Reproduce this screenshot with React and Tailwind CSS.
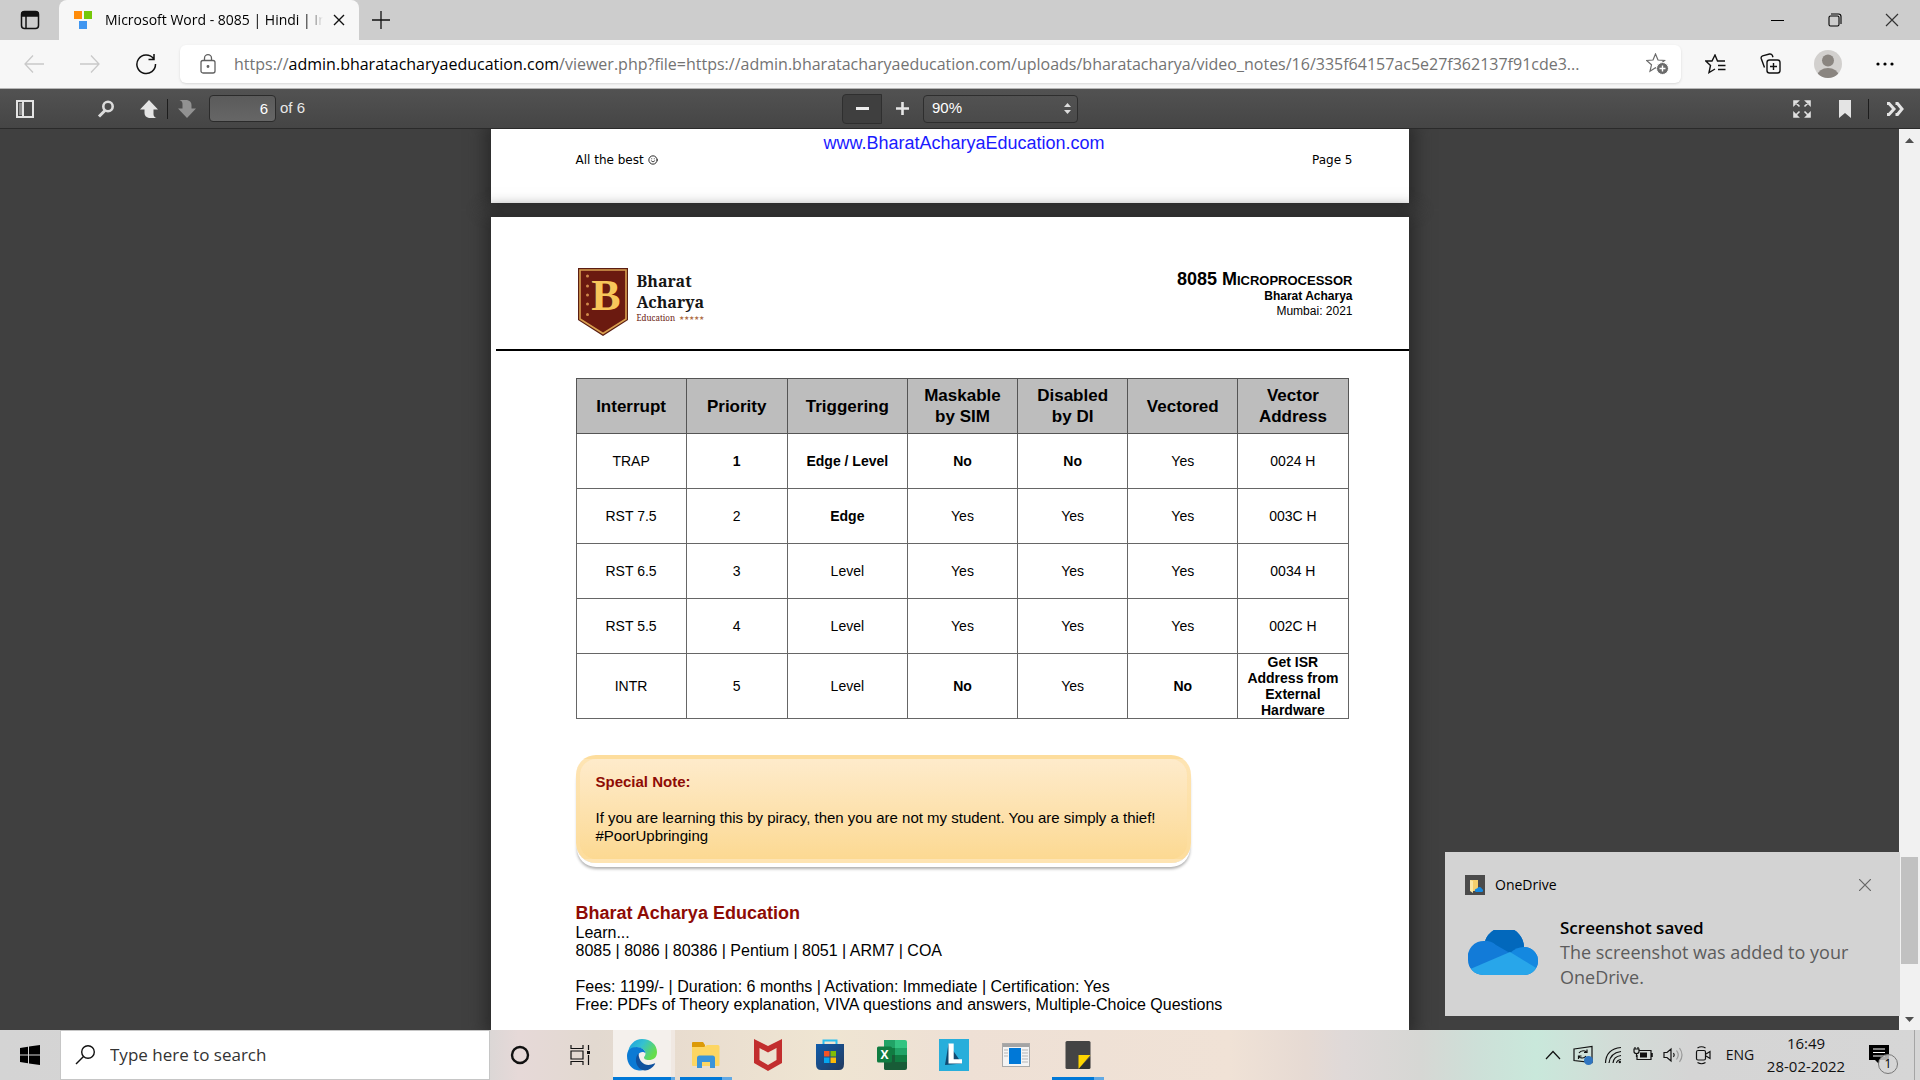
import React from "react";
import { Smile } from "lucide-react";

const UI = "font-['Open_Sans','Noto_Sans',sans-serif]";

const columns = [
  { label: "Interrupt", width: "w-[110px]" },
  { label: "Priority", width: "w-[101px]" },
  { label: "Triggering", width: "w-[120px]" },
  { label: "Maskable by SIM", width: "w-[110px]" },
  { label: "Disabled by DI", width: "w-[110px]" },
  { label: "Vectored", width: "w-[110px]" },
  { label: "Vector Address", width: "w-[110px]" },
];

// Cells that start with "*" are printed in bold.
const rows = [
  ["TRAP", "*1", "*Edge / Level", "*No", "*No", "Yes", "0024 H"],
  ["RST 7.5", "2", "*Edge", "Yes", "Yes", "Yes", "003C H"],
  ["RST 6.5", "3", "Level", "Yes", "Yes", "Yes", "0034 H"],
  ["RST 5.5", "4", "Level", "Yes", "Yes", "Yes", "002C H"],
  ["INTR", "5", "Level", "*No", "Yes", "*No", "*Get ISR Address from External Hardware"],
];

function TabStrip() {
  return (
    <header className="flex h-10 shrink-0 items-stretch bg-[#cdcdcd]">
      <button aria-label="Tab actions" className="flex w-[59px] items-center justify-center">
        <svg width="20" height="20" viewBox="0 0 20 20" fill="none" stroke="#111" strokeWidth="1.5">
          <rect x="1.5" y="1.5" width="17" height="17" rx="3" />
          <path d="M2 3.5Q2 2 4 2h12q2 0 2 1.5V6H2z" fill="#111" />
          <path d="M6 6v12" />
        </svg>
      </button>
      <div className="flex w-[300px] items-center rounded-t-lg bg-[#f7f7f7] pr-1 pl-[14px]">
        <svg width="20" height="20" viewBox="0 0 20 20" className="shrink-0">
          <rect x="1" y="1" width="8" height="8" fill="#ff8c0a" />
          <rect x="11" y="1" width="8" height="8" fill="#76c80a" />
          <rect x="6" y="11" width="8" height="8" fill="#4096f0" />
        </svg>
        <span className="ml-3 min-w-0 flex-1 overflow-hidden text-sm whitespace-nowrap text-black [mask-image:linear-gradient(to_right,black_92%,transparent)]">
          Microsoft Word - 8085 | Hindi | In
        </span>
        <button aria-label="Close tab" className="flex w-8 items-center justify-center">
          <svg width="12" height="12" viewBox="0 0 12 12" stroke="#111" strokeWidth="1.4"><path d="M1 1l10 10M11 1L1 11" /></svg>
        </button>
      </div>
      <button aria-label="New tab" className="flex w-11 items-center justify-center">
        <svg width="18" height="18" viewBox="0 0 18 18" stroke="#111" strokeWidth="1.3"><path d="M9 0v18M0 9h18" /></svg>
      </button>
      <div className="ml-auto flex">
        <button aria-label="Minimize" className="flex w-[57px] items-center justify-center">
          <svg width="13" height="13" viewBox="0 0 13 13" stroke="#000"><path d="M0 6.5h13" /></svg>
        </button>
        <button aria-label="Restore" className="flex w-[57px] items-center justify-center">
          <svg width="14" height="14" viewBox="0 0 14 14" fill="none" stroke="#000" strokeWidth="1.1">
            <rect x="1" y="3" width="10" height="10" rx="1.5" />
            <path d="M3 1h7.5Q13 1 13 3.5V11" />
          </svg>
        </button>
        <button aria-label="Close" className="flex w-[57px] items-center justify-center">
          <svg width="14" height="14" viewBox="0 0 14 14" stroke="#333" strokeWidth="1.2"><path d="M1 1l12 12M13 1L1 13" /></svg>
        </button>
      </div>
    </header>
  );
}

const star = "M9.5 1l2.5 6 6.5.5-5 4.3 1.5 6.5-5.5-3.6L4 18.3l1.5-6.5-5-4.3L7 7z";

function AddressBar() {
  return (
    <nav className="flex h-[49px] shrink-0 items-center border-b border-[#b5b5b5] bg-[#f7f7f7] pb-px">
      <button aria-label="Back" className="flex w-[68px] items-center justify-center">
        <svg width="20" height="20" viewBox="0 0 20 20" fill="none" stroke="#c9c9c9" strokeWidth="1.3"><path d="M20 10H1M9 1.5L1 10l8 8.5" /></svg>
      </button>
      <button aria-label="Forward" className="flex w-11 items-center justify-center">
        <svg width="20" height="20" viewBox="0 0 20 20" fill="none" stroke="#c9c9c9" strokeWidth="1.3"><path d="M0 10h19M11 1.5L19 10l-8 8.5" /></svg>
      </button>
      <button aria-label="Refresh" className="flex w-[68px] items-center justify-center">
        <svg width="22" height="22" viewBox="0 0 22 22" fill="none" stroke="#111" strokeWidth="1.5"><path d="M18.5 5.5A9.3 9.3 0 1 0 20.5 11M19 1v5.5h-5.500" /></svg>
      </button>
      <div className="flex h-[38px] min-w-0 flex-1 items-center rounded-md bg-white pr-3 pl-5 shadow-sm">
        <svg width="16" height="20" viewBox="0 0 16 20" fill="none" stroke="#606060" strokeWidth="1.3" className="shrink-0">
          <rect x="1" y="6.500" width="14" height="12.500" rx="2" />
          <path d="M4.500 6.500V4.200a3.500 3.500 0 0 1 7 0v2.300" />
          <circle cx="8" cy="12.500" r=".8" fill="#606060" />
        </svg>
        <a href="#address" className="ml-[18px] min-w-0 flex-1 truncate text-base text-[#737373]">
          https://<span className="text-black">admin.bharatacharyaeducation.com</span>/viewer.php?file=https://admin.bharatacharyaeducation.com/uploads/bharatacharya/video_notes/16/335f64157ac5e27f362137f91cde3...
        </a>
        <button aria-label="Add to favorites" className="ml-6 shrink-0">
          <svg width="23" height="22" viewBox="0 0 23 22" fill="none" stroke="#6b6b6b" strokeWidth="1.2">
            <path d={star} />
            <circle cx="16.500" cy="15.500" r="6" fill="#6b6b6b" stroke="#fff" strokeWidth="1" />
            <path d="M16.500 12.500v6M13.500 15.500h6" stroke="#fff" strokeWidth="1.4" />
          </svg>
        </button>
      </div>
      <div className="ml-[6px] flex items-center">
        <button aria-label="Favorites" className="flex w-[56px] items-center justify-center">
          <svg width="21" height="20" viewBox="0 0 21 20" fill="none" stroke="#111" strokeWidth="1.400">
            <path d="M20 7h-7.500L10 1 7 7H.800l4.700 4.500L4 18.500l6-3.500" />
            <path d="M13 11.500h7.500M13 15.500h7.500" />
          </svg>
        </button>
        <button aria-label="Collections" className="flex w-[55px] items-center justify-center">
          <svg width="21" height="21" viewBox="0 0 21 21" fill="none" stroke="#111" strokeWidth="1.400">
            <rect x="7" y="7" width="13" height="13" rx="2.500" />
            <path d="M13.500 10v7M10 13.500h7M4.500 14.500L1.200 5.500Q.800 3.500 2.600 2.800L9.500 1q2-.3 2.800 1.300l.7 2" />
          </svg>
        </button>
        <button aria-label="Profile" className="flex w-[59px] items-center justify-center">
          <svg width="28" height="28" viewBox="0 0 28 28">
            <clipPath id="face"><circle cx="14" cy="14" r="14" /></clipPath>
            <circle cx="14" cy="14" r="14" fill="#d2d0ce" />
            <g fill="#8a8580" clipPath="url(#face)"><circle cx="14" cy="10.500" r="6" /><ellipse cx="14" cy="25.500" rx="10.500" ry="7.500" /></g>
          </svg>
        </button>
        <button aria-label="Settings and more" className="flex w-[56px] items-center justify-center">
          <svg width="18" height="4" viewBox="0 0 18 4"><circle cx="2" cy="2" r="1.600" /><circle cx="9" cy="2" r="1.600" /><circle cx="16" cy="2" r="1.600" /></svg>
        </button>
        <span className="w-[7px]" />
      </div>
    </nav>
  );
}

function ViewerToolbar() {
  return (
    <div className="grid h-10 shrink-0 grid-cols-[1fr_auto_1fr] items-center border-b border-[#2a2a2a] bg-linear-to-b from-[#525252] to-[#454545] font-['Liberation_Sans',sans-serif] text-[15px] text-[#e8e8e8]">
      <div className="flex items-center">
        <button aria-label="Toggle sidebar" className="flex w-[50px] items-center justify-center">
          <svg width="18" height="18" viewBox="0 0 18 18" fill="none" stroke="#e4e4e4" strokeWidth="2">
            <rect x="1" y="1" width="16" height="16" />
            <rect x="3" y="3" width="3" height="12" fill="#8a8a8a" stroke="none" />
            <path d="M7 2v14" />
          </svg>
        </button>
        <button aria-label="Find in document" className="ml-9 flex w-10 items-center justify-center">
          <svg width="18" height="18" viewBox="0 0 18 18" fill="none" stroke="#dcdcdc" strokeWidth="2.600"><circle cx="11" cy="6.500" r="4.700" /><path d="M8 10.500l-6 6" strokeWidth="3" /></svg>
        </button>
        <button aria-label="Previous page" className="flex w-[41px] items-center justify-center pl-1">
          <svg width="18" height="18" viewBox="0 0 18 18" fill="#e4e4e4"><path d="M9 0l9 9.500h-4.500V14q0 3 3 4H9q-4.500-1-4.500-5V9.500H0z" /></svg>
        </button>
        <span className="h-5 w-px bg-[#1d1d1d]" />
        <button aria-label="Next page" className="flex w-[38px] items-center justify-center">
          <svg width="18" height="18" viewBox="0 0 18 18" fill="#929292"><path d="M9 18l9-9.500h-4.500V5q0-4-4.500-5H1.500q3 1 3 4v4.500H0z" /></svg>
        </button>
        <input aria-label="Page" defaultValue="6" className="ml-[3px] h-[27px] w-[67px] rounded-sm border border-[#2b2b2b] bg-linear-to-b from-[#5b5b5b] to-[#666] px-[7px] text-right text-white" />
        <span className="ml-1">of 6</span>
      </div>
      <div className="flex items-center">
        <button aria-label="Zoom out" className="flex h-[30px] w-10 items-center justify-center rounded-l-sm border border-[#2f2f2f] bg-[#3f3f3f]">
          <svg width="13" height="3" viewBox="0 0 13 3"><path d="M0 0h13v3H0z" fill="#eee" /></svg>
        </button>
        <button aria-label="Zoom in" className="flex w-[41px] items-center justify-center">
          <svg width="13" height="13" viewBox="0 0 13 13" stroke="#e6e6e6" strokeWidth="2.600"><path d="M0 6.500h13M6.500 0v13" /></svg>
        </button>
        <div className="relative flex items-center">
          <select aria-label="Zoom" defaultValue="90%" className="h-7 w-[155px] appearance-none rounded-sm border border-[#2e2e2e] bg-linear-to-b from-[#525252] to-[#4a4a4a] px-2 text-white">
            <option>90%</option>
            <option>100%</option>
          </select>
          <svg width="7" height="11" viewBox="0 0 7 11" fill="#ddd" className="pointer-events-none absolute right-[7px]"><path d="M3.500 0L7 4H0zM3.500 11L0 7h7z" /></svg>
        </div>
      </div>
      <div className="flex items-center justify-end">
        <button aria-label="Presentation mode" className="flex w-10 items-center justify-center">
          <svg width="18" height="18" viewBox="0 0 18 18" fill="#e0e0e0" stroke="#e0e0e0" strokeWidth="2">
            <path d="M1 1h4L1 5zM2 2l4.500 4.500M17 1v4l-4-4zM16 2l-4.500 4.500M1 17v-4l4 4zM2 16l4.500-4.500M17 17h-4l4-4zM16 16l-4.500-4.500" strokeWidth="1.600" />
          </svg>
        </button>
        <button aria-label="Current view" className="flex w-[46px] items-center justify-center">
          <svg width="12" height="18" viewBox="0 0 12 18" fill="#e4e4e4"><path d="M0 0h12v18l-6-5-6 5z" /></svg>
        </button>
        <span className="h-5 w-px bg-[#1d1d1d]" />
        <button aria-label="Tools" className="flex w-[51px] items-center justify-center">
          <svg width="18" height="14" viewBox="0 0 18 14" fill="none" stroke="#e4e4e4" strokeWidth="3"><path d="M1 1.500h2L8 7l-5 5.500H1M9.500 1.500h2L16 7l-4.500 5.500h-2" /></svg>
        </button>
      </div>
    </div>
  );
}

function BrandLogo() {
  return (
    <div className="flex items-start">
      <svg width="52" height="70" viewBox="0 0 52 70">
        <path d="M1 1h50v52L26 69 1 53z" fill="#5a1d12" />
        <path d="M3 3h46v49L26 66.500 3 52z" fill="#6b1a10" stroke="#d9a050" strokeWidth="1.600" />
        <g fill="#d08a4a">
          <circle cx="10.500" cy="9" r="1.500" /><circle cx="10.500" cy="19" r="1.500" /><circle cx="10.500" cy="28" r="1.500" /><circle cx="10.500" cy="37" r="1.500" /><circle cx="10.500" cy="47.500" r="1.500" />
        </g>
        <text x="29" y="43" textAnchor="middle" fontFamily="Liberation Serif, serif" fontWeight="bold" fontSize="44" fill="#f7c65a">B</text>
      </svg>
      <div className="ml-2 pt-1 font-['Noto_Serif','Liberation_Serif',serif] text-base leading-[21px] font-bold text-[#161616]">
        <div>Bharat</div>
        <div>Acharya</div>
        <div className="flex items-center text-[8px] leading-[10px] font-normal text-[#6b1a10]">Education <span className="ml-1 text-[6px] text-[#b07048]">★★★★★</span></div>
      </div>
    </div>
  );
}

function InterruptTable() {
  return (
    <table className="w-full table-fixed border-collapse text-center text-sm leading-[16px] text-black">
      <thead>
        <tr className="h-[55px] bg-[#bdbdbd] text-[17px] leading-[21px]">
          {columns.map((c) => (
            <th key={c.label} className={`${c.width} border border-[#555] px-3`}>{c.label}</th>
          ))}
        </tr>
      </thead>
      <tbody>
        {rows.map((row) => (
          <tr key={row[0]} className="h-[55px]">
            {row.map((cell, i) => (
              <td key={i} className={`border border-[#666] p-0 ${cell.startsWith("*") ? "font-bold" : ""}`}>
                <div className="mx-auto max-w-[96px]">{cell.replace("*", "")}</div>
              </td>
            ))}
          </tr>
        ))}
      </tbody>
    </table>
  );
}

function Document() {
  return (
    <main className="flex min-w-0 flex-1 flex-col items-center gap-[14px] overflow-hidden bg-[#404040]">
      <section className="flex h-[74px] w-[918px] shrink-0 flex-col bg-white pr-14 pl-[85px] shadow-[0_0_16px_6px_#2a2a2a]">
        <a href="#site" className="text-center font-['Liberation_Sans',sans-serif] text-lg leading-7 text-[#1a1aff]">www.BharatAcharyaEducation.com</a>
        <div className="-mt-[7px] flex items-center justify-between font-['DejaVu_Sans',sans-serif] text-xs leading-5 text-black">
          <span className="flex items-center gap-1">All the best <Smile size={10} /></span>
          <span>Page 5</span>
        </div>
      </section>
      <section className="min-h-0 w-[918px] flex-1 bg-white font-['Liberation_Sans',sans-serif] text-black shadow-[0_0_16px_6px_#2a2a2a]">
        <div className="ml-[5px] flex h-[134px] items-start justify-between border-b-2 border-black pt-[50px] pr-14 pl-[81px]">
          <BrandLogo />
          <div className="pt-[2px] text-right">
            <h1 className="text-lg leading-5 font-bold [font-variant-caps:small-caps]">8085 Microprocessor</h1>
            <div className="text-xs leading-[15px] font-bold">Bharat Acharya</div>
            <div className="text-xs leading-[15px]">Mumbai: 2021</div>
          </div>
        </div>
        <div className="pt-[27px] pr-[60px] pl-[85px]">
          <InterruptTable />
          <div className="mt-9 w-[615px] rounded-[20px] border-4 border-[#fddfa4]/60 bg-linear-to-b from-[#feebcb] to-[#fcd992] px-4 py-[14px] text-[15px] leading-[18px] shadow-[0_5px_0_-1px_#fff,0_7px_3px_-1px_#b0b0b0]">
            <h2 className="mb-[18px] font-bold text-[#8e0b05]">Special Note:</h2>
            <p>If you are learning this by piracy, then you are not my student. You are simply a thief! #PoorUpbringing</p>
          </div>
          <h2 className="mt-[39px] text-lg leading-[22px] font-bold text-[#8e0b05]">Bharat Acharya Education</h2>
          <div className="text-base leading-[18px] whitespace-nowrap">
            <p>Learn...</p>
            <p>8085 | 8086 | 80386 | Pentium | 8051 | ARM7 | COA</p>
            <p className="mt-[18px]">Fees: 1199/- | Duration: 6 months | Activation: Immediate | Certification: Yes</p>
            <p>Free: PDFs of Theory explanation, VIVA questions and answers, Multiple-Choice Questions</p>
          </div>
        </div>
      </section>
    </main>
  );
}

function Scrollbar() {
  return (
    <div className="flex w-[21px] shrink-0 flex-col items-center justify-between bg-[#f1f1f1]">
      <svg width="21" height="22" viewBox="0 0 21 22" fill="#505050"><path d="M6 14l4.500-5 4.500 5z" /></svg>
      <div className="mt-auto mb-[44px] h-[107px] w-[17px] bg-[#c1c1c1]" />
      <svg width="21" height="22" viewBox="0 0 21 22" fill="#505050"><path d="M6 9l4.500 5 4.500-5z" /></svg>
    </div>
  );
}

function Toast() {
  return (
    <aside className={`absolute right-5 bottom-[14px] flex h-[164px] w-[455px] flex-col bg-[#d3d3d3] px-5 pt-[23px] ${UI}`}>
      <div className="flex items-center">
        <svg width="20" height="20" viewBox="0 0 20 20">
          <path d="M0 0h20v20H0z" fill="#4a4a4a" />
          <path d="M5 5h8v11H7l-2-1z" fill="#f4cf6c" />
          <path d="M5 5l3 1v12l-3-2z" fill="#fbe7a4" />
          <path d="M11 17q-2-1-1-2.500 1-1 2-1 1-2 3-1.500 1.500.3 2 2 1.500.5 1 2-.3 1-1 1z" fill="#1488e0" />
        </svg>
        <span className="ml-[10px] text-sm text-black">OneDrive</span>
        <button aria-label="Dismiss" className="mr-[9px] ml-auto">
          <svg width="12" height="12" viewBox="0 0 12 12" stroke="#666" strokeWidth="1.200"><path d="M0 0l12 12M12 0L0 12" /></svg>
        </button>
      </div>
      <div className="mt-5 flex items-center pl-[3px]">
        <svg width="70" height="46" viewBox="0 0 70 46" className="shrink-0">
          <defs>
            <clipPath id="cloud"><path d="M15 45A15 15 0 0 1 0 30 16 16 0 0 1 17 11 20 20 0 0 1 56 17 14 14 0 0 1 56 45z" /></clipPath>
          </defs>
          <g clipPath="url(#cloud)">
            <path d="M0 0h70v46H0z" fill="#127bd8" />
            <path d="M14 11q8-1 14 4l14 8 14-6V0H14z" fill="#0268bc" />
            <path d="M42 23q6-6 14-6h14v22z" fill="#1488e0" />
            <path d="M0 40l42-18 28 17v8H0z" fill="#28a6ea" />
          </g>
        </svg>
        <div className="ml-[22px] leading-[25px] text-[#5c5c5c]">
          <div className="text-[17px] leading-[25px] font-semibold text-black">Screenshot saved</div>
          <p className="text-lg leading-[25px]">The screenshot was added to your OneDrive.</p>
        </div>
      </div>
    </aside>
  );
}

const EdgeIcon = () => (
  <svg width="30" height="32" viewBox="0 0 30 32">
    <defs>
      <linearGradient id="edgeTop" x1="0" y1="0" x2="1" y2=".5"><stop offset="0" stopColor="#1b9de2" /><stop offset=".5" stopColor="#35c1d0" /><stop offset="1" stopColor="#66dd4a" /></linearGradient>
    </defs>
    <path d="M1 15C1 6 8 0 15 0c9 0 15 6 15 13 0 6-4 8-8 8-4 0-5-1.500-5-2.500 0-1 1.500-1.500 1.500-4 0-3.500-4-6-8-6S1 11 1 15z" fill="url(#edgeTop)" />
    <path d="M0 17C0 11 4 8 9.500 8c5 0 9 3 9 6.500-1-2-6-2.500-7.500 2-1.500 5 2 12 10 11-2 2.500-5 4.500-9 4C5 31 0 25 0 17z" fill="#0b7ad4" />
    <path d="M11.500 14.500C6 20 10 31 18 31.500c4 0 8-3 10-6.500q.5-1-.7-.5C20 28 12 25 11.500 14.500z" fill="#10519e" />
  </svg>
);

const FolderIcon = () => (
  <svg width="28" height="26" viewBox="0 0 28 26">
    <path d="M0 1q0-1 1-1h10l2 3v6H0z" fill="#dc9a08" />
    <path d="M0 5h12l3-2h11q1.500 0 1.500 1.500V23q0 1-1 1H1q-1 0-1-1z" fill="#fdd663" />
    <path d="M5 26V16q0-2.500 2.500-2.500h13Q23 13.500 23 16v10h-5v-6h-8v6z" fill="#3a94da" />
  </svg>
);

const ShieldIcon = () => (
  <svg width="28" height="32" viewBox="0 0 28 32"><path fillRule="evenodd" d="M0 0l14 7L28 0v24l-14 8-14-8zM5.500 9v12l8.500 5 8.500-5V9L14 13.500z" fill="#c22e2e" /></svg>
);

const StoreIcon = () => (
  <svg width="30" height="32" viewBox="0 0 30 32">
    <defs><linearGradient id="bag" x1="0" y1="0" x2="1" y2="1"><stop stopColor="#0f5cab" /><stop offset="1" stopColor="#243a5e" /></linearGradient></defs>
    <path d="M8.500 6V1.500h13V6" fill="none" stroke="#2cc0f0" strokeWidth="2" />
    <path d="M1 5h28v20q0 6-5 6H6q-5 0-5-6z" fill="url(#bag)" />
    <path d="M9 12h5.500v5.500H9z" fill="#f35325" /><path d="M15.500 12H21v5.500h-5.500z" fill="#81bc06" />
    <path d="M9 18.500h5.500V24H9z" fill="#05a6f0" /><path d="M15.500 18.500H21V24h-5.500z" fill="#ffba08" />
  </svg>
);

const ExcelIcon = () => (
  <svg width="30" height="30" viewBox="0 0 30 30">
    <path d="M7 0h11v8H7z" fill="#21a366" /><path d="M18 0h10q2 0 2 2v6H18z" fill="#33c481" />
    <path d="M7 8h11v7H7z" fill="#107c41" /><path d="M18 8h12v7H18z" fill="#21a366" />
    <path d="M7 15h23v7H18v8H9q-2 0-2-2z" fill="#185c37" /><path d="M18 15h12v7H18z" fill="#107c41" />
    <path d="M7 22h23v6q0 2-2 2H9q-2 0-2-2z" fill="#185c37" />
    <rect y="6.500" width="15" height="16" rx="1.500" fill="#107c41" />
    <text x="7.500" y="19" textAnchor="middle" fontFamily="Open Sans, sans-serif" fontWeight="bold" fontSize="12" fill="#fff">X</text>
  </svg>
);

const LIcon = () => (
  <svg width="30" height="32" viewBox="0 0 30 32">
    <path d="M0 0h30v32H0z" fill="#27aedb" />
    <path d="M9.500 5L6 26l17-1.500z" fill="#114a72" />
    <path d="M9.500 4.500h5.200v15.700H23v4.300H9.500z" fill="#fff" />
  </svg>
);

const WindowIcon = () => (
  <svg width="28" height="24" viewBox="0 0 28 24">
    <rect x=".5" y=".5" width="27" height="23" fill="#f4f4f4" stroke="#aaa" />
    <path d="M1 1h26v3H1z" fill="#a4a4a4" />
    <path d="M2 7h4M2 10h4M2 13h4M20 7h6M20 10h6M20 13h6M20 16h6M20 19h6" stroke="#b5b5b5" />
    <path d="M7 5h12v16H7z" fill="#0078d7" />
  </svg>
);

const NoteIcon = () => (
  <svg width="28" height="30" viewBox="0 0 28 30">
    <path d="M3 1h22q1.500 0 1.500 1.500V16L15 29H3q-1.500 0-1.500-1.500v-25Q1.500 1 3 1z" fill="#444" />
    <path d="M26.500 16v11.500q0 1.500-1.500 1.500H14z" fill="#303030" />
    <path d="M14.500 15h12L14.500 29z" fill="#fed500" />
  </svg>
);

const apps = [
  { name: "Microsoft Edge", icon: <EdgeIcon />, active: true, open: true },
  { name: "File Explorer", icon: <FolderIcon />, open: true },
  { name: "McAfee", icon: <ShieldIcon /> },
  { name: "Microsoft Store", icon: <StoreIcon /> },
  { name: "Excel", icon: <ExcelIcon /> },
  { name: "L", icon: <LIcon /> },
  { name: "Application window", icon: <WindowIcon /> },
  { name: "Sticky Notes", icon: <NoteIcon />, open: true },
];

function TrayIcon({ label, width, children }) {
  return (
    <button aria-label={label} className="flex w-[30px] items-center justify-center">
      <svg width={width || 20} height="20" viewBox={`0 0 ${width || 20} 20`} fill="none" stroke="#111" strokeWidth="1.200">{children}</svg>
    </button>
  );
}

function Taskbar() {
  return (
    <footer className={`flex h-[50px] shrink-0 items-stretch bg-[linear-gradient(to_right,#d4d4d4_0%,#d8d6d5_25%,#e6d9d8_27%,#e2d9d0_31%,#e8dccf_35%,#efe5d2_43%,#eee0d5_50%,#f0e2d6_64%,#e6dad3_68%,#dfd9d8_70%,#d6d7d4_74%,#cde0d8_77%,#c9e8db_80%,#d2dcd7_84%,#d5d5d5_88%,#d6d6d6_100%)] ${UI}`}>
      <button aria-label="Start" className="flex w-[60px] items-center justify-center">
        <svg width="20" height="20" viewBox="0 0 20 20"><path d="M0 3l8-1.200V9.500H0zM9 1.600L20 0v9.500H9zM0 10.500h8v7.700L0 17zM9 10.500h11V20L9 18.400z" /></svg>
      </button>
      <label className="flex w-[430px] items-center border border-[#c6c6c6] bg-white pl-[14px]">
        <svg width="21" height="20" viewBox="0 0 21 20" fill="none" stroke="#111" strokeWidth="1.400"><circle cx="13" cy="7" r="6.300" /><path d="M8.500 11.500L1 19" /></svg>
        <input type="text" aria-label="Search" placeholder="Type here to search" className="ml-[14px] flex-1 bg-transparent text-[17px] outline-none placeholder:text-[#333]" />
      </label>
      <button aria-label="Cortana" className="flex w-[60px] items-center justify-center">
        <svg width="20" height="20" viewBox="0 0 20 20" fill="none" stroke="#111" strokeWidth="2.400"><circle cx="10" cy="10" r="8" /></svg>
      </button>
      <button aria-label="Task view" className="flex w-[63px] items-center justify-center pr-1">
        <svg width="20" height="20" viewBox="0 0 20 20" fill="none" stroke="#111" strokeWidth="1.200">
          <path d="M1 0v3.500h12V0M1 20v-3.500h12V20M1 6h12v8H1zM18.500 0v5M18.500 10v10" /><path d="M17 6h3v3h-3z" fill="#111" stroke="none" />
        </svg>
      </button>
      {apps.map((app) => (
        <button key={app.name} aria-label={app.name} className={`relative flex w-[62px] items-center justify-center ${app.active ? "border-r-4 border-[#f0e8e2] bg-[#f4f0ec]" : ""}`}>
          {app.icon}
          {app.open && (
            <span className={`absolute bottom-0 flex h-[3px] ${app.active ? "-right-1 left-0" : "inset-x-[5px]"}`}>
              <span className="flex-1 bg-[#0078d7]" />
              <span className={`bg-[#62a9e4] ${app.active ? "w-1" : "w-[10px]"}`} />
            </span>
          )}
        </button>
      ))}
      <div className="ml-auto flex items-stretch text-sm text-[#111]">
        <TrayIcon label="Show hidden icons" width={16}><path d="M1 14l7-7.500 7 7.500" /></TrayIcon>
        <TrayIcon label="Sync">
          <path d="M1 4l18-2.500v16L1 15.500z" />
          <path d="M6 8q2-3 6-2l1.500 1.500M14 4.500v3h-3M13 11q-2 3-6 1.500L6 11.500M5.500 14v-3h3" />
          <circle cx="15.500" cy="15.500" r="4.500" fill="#2f75c0" stroke="none" />
        </TrayIcon>
        <TrayIcon label="Network" width={18}>
          <path d="M1.500 18Q2 4 17 2.500M5 18Q6 8 17 6.500M9 18q.5-6.500 8-7.500M12.500 18q.5-3 4.500-3.500" />
          <circle cx="15.800" cy="17" r="1.200" fill="#111" stroke="none" />
        </TrayIcon>
        <TrayIcon label="Battery">
          <path d="M6 5.500h12v9H4V10M19.200 8v4" /><path d="M7 7.500h7v5H7z" fill="#111" stroke="none" />
          <path d="M1 4h5v2.500q0 2-2.500 2T1 6.500zM2 2v2M5 2v2M3.500 8.500V12" />
        </TrayIcon>
        <TrayIcon label="Volume">
          <path d="M1 7.500h3L8 4v12l-4-3.500H1zM10.500 8q1.500 2 0 4" /><path d="M13.500 5.500q3.500 4.500 0 9M16.500 3q5 7 0 14" stroke="#999" />
        </TrayIcon>
        <TrayIcon label="Meet now">
          <rect x="3.500" y="5.500" width="9" height="9.500" rx="1.500" /><path d="M13 9l4-2.500v7L13 11M4.500 3q4-2.500 8 0M4.500 17.500q4 2.500 8 0" />
        </TrayIcon>
        <button aria-label="Language" className="w-11">ENG</button>
        <button aria-label="Date and time" className="flex w-[88px] flex-col items-center justify-center text-[15px] leading-[23px]">
          <span>16:49</span>
          <span>28-02-2022</span>
        </button>
        <button aria-label="Notifications" className="relative flex w-[70px] items-center justify-start pl-[19px]">
          <svg width="20" height="20" viewBox="0 0 20 20"><path d="M0 0h20v15H10v4l-4-4H0z" fill="#000" /><path d="M4 4h12M4 7.500h12M4 11h12" stroke="#fff" /></svg>
          <span className="absolute right-[22px] bottom-[6px] flex size-5 items-center justify-center rounded-full border border-[#777] bg-[#d6d6d6]/80 text-xs text-black">1</span>
          <span className="absolute inset-y-0 right-[5px] w-px bg-[#a5a5a5]" />
        </button>
      </div>
    </footer>
  );
}

export default function App() {
  return (
    <div className={`flex h-screen flex-col overflow-hidden ${UI}`}>
      <TabStrip />
      <AddressBar />
      <ViewerToolbar />
      <div className="relative flex min-h-0 flex-1">
        <Document />
        <Scrollbar />
        <Toast />
      </div>
      <Taskbar />
    </div>
  );
}
